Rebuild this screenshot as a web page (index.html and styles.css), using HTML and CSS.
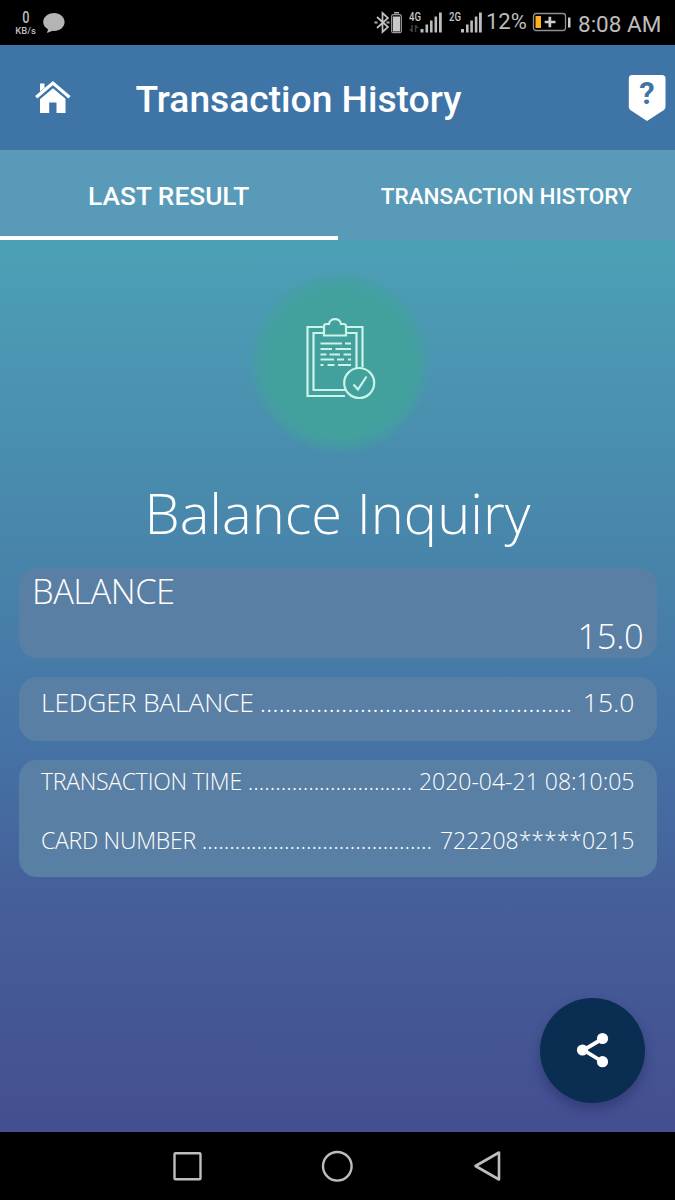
FILE: index.html
```html
<!DOCTYPE html>
<html lang="en">
<head>
<meta charset="utf-8">
<title>Transaction History</title>
<link rel="stylesheet" href="styles.css">
</head>
<body>
<div class="status">
  <div class="speed"><span class="speed-num">0</span><span class="speed-unit">KB/s</span></div>
  <svg class="bubble" width="24" height="22" viewBox="0 0 24 22"><path fill="#b4b4b4" d="M12 1c6 0 10.600 4 10.600 9s-4.600 9-10.600 9h-2L5 21l1-3.700C3 15.600 1.200 13 1.200 10 1.200 5 6 1 12 1z"/></svg>
  <svg class="radios" width="112" height="26" viewBox="370 10 112 26">
    <g fill="none" stroke="#c2c2c2" stroke-width="1.700"><path d="M377 17l11 10-5.500 5V13l5.500 5-11 10"/></g>
    <path fill="#b0b0b0" d="M374.500 21.500h3v2h-3zM386.500 21.500h3v2h-3zM394 12h5v1.500h-5z"/>
    <rect x="391.700" y="14.700" width="9.600" height="18" rx="1.500" fill="none" stroke="#999" stroke-width="1.300"/>
    <path fill="#c8c8c8" d="M393 16.500h7v15h-7z"/>
    <text class="net" x="409" y="20.500" textLength="12" lengthAdjust="spacingAndGlyphs">4G</text>
    <text class="net" x="449" y="20.500" textLength="12" lengthAdjust="spacingAndGlyphs">2G</text>
    <path fill="#404040" d="M412.800 32h-1.500l-2.300-3h2.300v-4h1.500zM414.800 25h1.500l2.300 3h-2.300v4h-1.500z"/>
    <path fill="#bcbcbc" d="M420.500 29h3v3.500h-3zM425.500 24.500h2.600v8h-2.600zM430 20.500h2.600v12H430zM434.500 16.500h2.600v16h-2.600zM439 12.500h2.800v20H439zM461 29h3v3.500h-3zM466 24.500h2.600v8H466zM470.300 20.500h2.600v12h-2.600zM474.800 16.500h2.600v16h-2.600zM479 12.500h2.800v20H479z"/>
  </svg>
  <span class="percent">12%</span>
  <svg class="battery" width="40" height="20" viewBox="0 0 40 20"><rect x="1.500" y="1.500" width="32" height="17" rx="2.500" fill="none" stroke="#909090" stroke-width="1.300"/><path fill="#fbb01d" d="M3.500 4h5.500v12H3.500z"/><path fill="#ccc" d="M16.500 4.800h0v3.900h-3.800v2.600h3.800v4h2.700v-4h4.300V8.700h-4.300V4.800zM36 5.500h2.500v10H36z"/></svg>
  <span class="clock">8:08 AM</span>
</div>
<header class="bar">
  <svg class="home" width="38" height="34" viewBox="0 0 38 34"><path fill="#fff" d="M6 3.500h4.500v4.300L6 11.600zM19 8.300l12.500 10.400v14.200h-9V22.500h-7.300v10.400H6V19.200z"/><path d="M2.200 17.200L18.900 3l16.600 14.200" fill="none" stroke="#fff" stroke-width="3.200"/></svg>
  <h1 class="bar-title">Transaction History</h1>
  <svg class="help" width="38" height="48" viewBox="0 0 38 48"><path fill="#fff" d="M4 1h30q3.500 0 3.500 3.500V33q0 2-2 3.300L19 47 2.700 36.300Q.8 35 .8 33V4.500Q.8 1 4 1z"/><text class="help-mark" x="19" y="30" text-anchor="middle">?</text></svg>
</header>
<nav class="tabs">
  <span class="tab tab-active"><span class="t-last">LAST RESULT</span></span>
  <span class="tab"><span class="t-history">TRANSACTION HISTORY</span></span>
</nav>
<main class="content">
  <div class="badge">
    <svg width="72" height="84" viewBox="304 316 72 84" fill="none" stroke="#cdf3e8" stroke-width="2.200">
      <path d="M345 396h-37.500V327H324M347 327h15.500v40M345 390h-31.500V333H324M347 333h9.500v35" />
      <path d="M324 335.500V326q0-2 2.500-2h2.500c.5-6.500 11.500-6.500 12 0h2.500q2.500 0 2.500 2v9.500z"/>
      <path d="M320.500 343.500H342M345 343.500h6M320.500 349H332M335.500 349H351M320.500 354.500h6M329.500 354.500H340M343.500 354.500h7.500M320.500 359.500H334M337 359.500h7M348 359.500h3M320.500 365h3M327.500 365h7M338 365h13"/>
      <circle cx="359.200" cy="383" r="15"/><path d="M353.500 384.500l4.500 5 8.500-13"/>
    </svg>
  </div>
  <h2 class="heading">Balance Inquiry</h2>
  <section class="card card-balance">
    <span class="balance-label">BALANCE</span>
    <span class="balance-value">15.0</span>
  </section>
  <section class="card card-ledger">
    <div class="row"><span class="label-ledger">LEDGER BALANCE</span><span class="dots dots-ledger">..................................................</span><span>15.0</span></div>
  </section>
  <section class="card card-details">
    <div class="row"><span class="label">TRANSACTION TIME</span><span class="dots">..............................</span><span>2020-04-21 08:10:05</span></div>
    <div class="row"><span class="label">CARD NUMBER</span><span class="dots">..........................................</span><span>722208*****0215</span></div>
  </section>
  <div class="share"><svg width="34" height="38" viewBox="0 0 34 38"><path d="M27 7.500L7.500 19 27 31" fill="none" stroke="#fff" stroke-width="3.800"/><g fill="#fff"><circle cx="26.500" cy="7.500" r="5.600"/><circle cx="6.500" cy="19" r="5.600"/><circle cx="26.500" cy="30.700" r="5.600"/></g></svg></div>
</main>
<footer class="navbar">
  <svg width="32" height="34" viewBox="0 0 32 34"><rect x="3.500" y="4.300" width="26" height="26" rx="1" fill="none" stroke="#bdbdbd" stroke-width="2.400"/></svg>
  <svg width="34" height="34" viewBox="0 0 34 34"><circle cx="17.300" cy="17.300" r="14.300" fill="none" stroke="#bdbdbd" stroke-width="2.400"/></svg>
  <svg width="32" height="34" viewBox="0 0 32 34"><path d="M28 3.500v27L4.500 17z" fill="none" stroke="#bdbdbd" stroke-width="2.600" stroke-linejoin="round"/></svg>
</footer>
</body>
</html>
```
FILE: styles.css
```css
* { box-sizing: border-box; }
body { margin: 0; width: 675px; height: 1200px; overflow: hidden; display: flex; flex-direction: column; font-family: Roboto, sans-serif; color: #fff; white-space: nowrap; }
svg { display: block; flex: none; }
span { display: inline-block; flex: none; }
.status { height: 45px; flex: none; background: #000; color: #bdbdbd; display: flex; align-items: flex-start; padding-left: 15px; }
.speed { width: 21px; padding-top: 9px; display: flex; flex-direction: column; align-items: center; }
.speed-num { font-size: 17px; line-height: 17px; font-weight: 500; transform: scaleX(.75); }
.speed-unit { font-size: 9.500px; line-height: 10px; font-weight: 500; }
.bubble { margin: 12px 0 0 6px; }
.radios { margin: 10px 0 0 304px; }
.net { font: 500 12.500px Roboto, sans-serif; fill: #c4c4c4; }
.percent { font-size: 22px; line-height: 26px; margin: 9px 0 0 4px; width: 42px; }
.battery { margin: 12px 0 0 4px; }
.clock { font-size: 22.500px; line-height: 26px; margin: 11px 0 0 6px; }
.bar { height: 105px; flex: none; background: #3f74a7; display: flex; align-items: flex-start; }
.home { margin: 35px 0 0 34px; }
.bar-title { font-size: 37.200px; line-height: 44px; font-weight: 500; margin: 32px 0 0 63.500px; width: 492.500px; }
.help { margin: 29px 0 0; }
.help-mark { font: 700 31px Roboto, sans-serif; fill: #3f74a7; }
.tabs { height: 90px; flex: none; display: flex; background: #589ab7; }
.tab { width: 337.500px; height: 90px; text-align: center; line-height: 92px; font-weight: 500; }
.tab-active { border-bottom: 4px solid #fff; }
.t-last { font-size: 26.300px; }
.t-history { font-size: 22.500px; }
.content { position: relative; height: 892px; flex: none; background: linear-gradient(#4ca0b6 0, #4884aa 320px, #4571a5 520px, #45609a 650px, #444e91 892px); font-family: "Open Sans", sans-serif; font-weight: 300; padding: 33px 19px 0; display: flex; flex-direction: column; }
.badge { width: 180px; height: 180px; margin: 0 0 0 231px; border-radius: 50%; background: radial-gradient(circle, #42a19d 0, #42a19d 70px, rgba(66,161,157,.75) 80px, rgba(66,150,170,0) 92px); padding: 43px 0 0 54px; }
.heading { margin: 19px 0 0; height: 96px; font-size: 56px; line-height: 80px; font-weight: 300; text-align: center; }
.card { width: 637.500px; border-radius: 18px; background: #5a7fa4; flex: none; }
.card-balance { height: 90px; display: flex; flex-direction: column; font-size: 34.500px; line-height: 45px; padding: 0 13px; }
.balance-label { align-self: flex-start; letter-spacing: -.5px; }
.balance-value { align-self: flex-end; letter-spacing: -.3px; }
.card-ledger { height: 64px; margin-top: 18.500px; padding: 7px 22px; font-size: 26.500px; line-height: 36px; }
.card-details { height: 117.500px; margin-top: 19px; padding: 3.500px 22px; font-size: 23px; line-height: 36px; display: flex; flex-direction: column; gap: 23px; }
.row { display: flex; }
.label { letter-spacing: -.27px; }
.label-ledger { letter-spacing: -.2px; }
.dots { margin: 0 auto 0 6px; }
.dots-ledger { letter-spacing: -.07px; }
.share { position: absolute; left: 540px; top: 758px; width: 105px; height: 105px; border-radius: 50%; background: #092e52; box-shadow: 0 6px 12px rgba(30,30,80,.4); padding: 33px 0 0 36px; }
.navbar { height: 68px; flex: none; background: #000; display: flex; padding: 17px 0 0 171px; gap: 117px; }
```
